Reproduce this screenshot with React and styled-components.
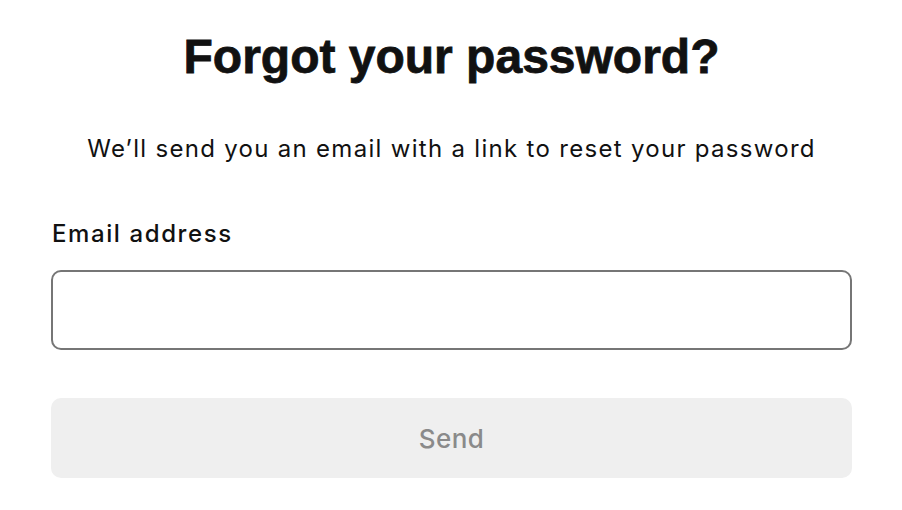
import React from "react";
import styled, { createGlobalStyle } from "styled-components";

const Global = createGlobalStyle`
  html, body { margin: 0; padding: 0; background: #fff; }
  * { box-sizing: border-box; }
`;

const Page = styled.main`
  display: flex;
  flex-direction: column;
  padding: 29px 50px 0 51px;
  font-family: Inter, "Liberation Sans", sans-serif;
  color: #111;
`;

const Title = styled.h1`
  margin: 0;
  text-align: center;
  font-family: "Liberation Sans", Arial, sans-serif;
  font-weight: 700;
  font-size: 48px;
  line-height: 56px;
  color: #111;
  -webkit-text-stroke: 0.8px #111;
`;

const Subtitle = styled.p`
  margin: 49px 0 0;
  text-align: center;
  font-size: 24px;
  line-height: 30px;
  font-weight: 400;
  letter-spacing: 1.3px;
`;

const Form = styled.form`
  display: flex;
  flex-direction: column;
  margin-top: 55px;
`;

const Label = styled.label`
  font-size: 24px;
  line-height: 30px;
  font-weight: 500;
  letter-spacing: 1.6px;
  margin-left: 1px;
`;

const Input = styled.input`
  margin-top: 21px;
  height: 80px;
  border: 2px solid #767676;
  border-radius: 10px;
  font: inherit;
  padding: 0 20px;
  outline: none;
`;

const Button = styled.button`
  margin-top: 48px;
  height: 80px;
  border: none;
  border-radius: 10px;
  background: #efefef;
  color: #8a8a8a;
  font-family: inherit;
  font-size: 26px;
  font-weight: 500;
  letter-spacing: 0.4px;
`;

export default function App() {
  return (
    <>
      <Global />
      <Page>
        <Title>Forgot your password?</Title>
        <Subtitle>We’ll send you an email with a link to reset your password</Subtitle>
        <Form onSubmit={(e) => e.preventDefault()}>
          <Label htmlFor="email">Email address</Label>
          <Input id="email" type="email" />
          <Button type="submit" disabled>Send</Button>
        </Form>
      </Page>
    </>
  );
}
